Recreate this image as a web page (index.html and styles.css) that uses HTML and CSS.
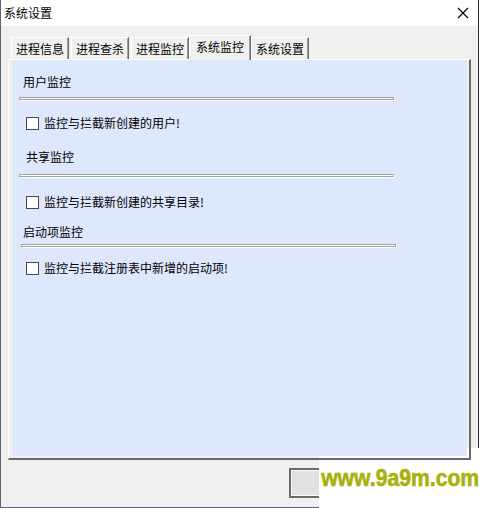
FILE: index.html
```html
<!DOCTYPE html>
<html lang="zh-CN">
<head>
<meta charset="utf-8">
<title>系统设置</title>
<link rel="stylesheet" href="styles.css">
</head>
<body>
<div class="window">
  <div class="titlebar">
    <span class="title">系统设置</span>
    <svg class="close" width="12" height="12" viewBox="0 0 12 12"><path d="M1 1 L11 11 M11 1 L1 11" stroke="#000" stroke-width="1.1" fill="none"/></svg>
  </div>
  <div class="body">
    <div class="tabs">
      <div class="tab t1">进程信息</div>
      <div class="tab t2">进程查杀</div>
      <div class="tab t3">进程监控</div>
      <div class="tab sel">系统监控</div>
      <div class="tab t5">系统设置</div>
    </div>
    <div class="panel">
      <div class="page">
        <div class="label l1">用户监控</div>
        <div class="groove g1"></div>
        <div class="check c1"><span class="box"></span><span class="ctext">监控与拦截新创建的用户!</span></div>
        <div class="label l2">共享监控</div>
        <div class="groove g2"></div>
        <div class="check c2"><span class="box"></span><span class="ctext">监控与拦截新创建的共享目录!</span></div>
        <div class="label l3">启动项监控</div>
        <div class="groove g3"></div>
        <div class="check c3"><span class="box"></span><span class="ctext">监控与拦截注册表中新增的启动项!</span></div>
      </div>
    </div>
    <div class="footer">
      <div class="button"></div>
    </div>
  </div>
  <div class="watermark"><span class="wm-text">www.9a9m.com</span></div>
</div>
</body>
</html>
```

FILE: styles.css
```css
* { box-sizing: border-box; }
html, body { margin: 0; padding: 0; }
body {
  width: 479px;
  height: 508px;
  overflow: hidden;
  background: #f0f0f0;
  font-family: "Noto Sans CJK SC", "Noto Sans", sans-serif;
  font-size: 12px;
  color: #000;
}
.window {
  position: relative;
  width: 479px;
  height: 508px;
  border-left: 1px solid #5d6470;
  border-right: 1px solid #2e2e2e;
  border-bottom: 1px solid #5d6470;
  background: #f0f0f0;
}
.titlebar {
  height: 26px;
  background: #fff;
  display: flex;
  align-items: center;
  justify-content: space-between;
  padding: 0 9px 0 3px;
}
.title { line-height: 16px; }
.close { display: block; }
.body { padding-top: 9px; }
.tabs {
  display: flex;
  align-items: flex-end;
  height: 24px;
  padding-left: 10px;
  position: relative;
  z-index: 2;
}
.tab {
  height: 22px;
  width: 58px;
  background: #f0f0f0;
  border-top: 1px solid #fff;
  border-left: 1px solid #fff;
  border-right: 1px solid #696969;
  box-shadow: inset -1px 0 0 #a0a0a0;
  display: flex;
  align-items: center;
  justify-content: center;
  line-height: 16px;
  padding-top: 1px;
}
.t1, .t2 { margin-right: 2px; }
.tab.sel {
  width: 62px;
  height: 25px;
  margin-bottom: -1px;
  padding-top: 0;
  padding-bottom: 2px;
}
.panel {
  margin-left: 7px;
  width: 463px;
  height: 401px;
  border-top: 1px solid #fff;
  border-left: 1px solid #fff;
  border-right: 2px solid #696969;
  border-bottom: 2px solid #696969;
  padding: 0 2px 2px 3px;
  position: relative;
  z-index: 1;
}
.page {
  height: 100%;
  background: #dee8fc;
  padding-top: 14px;
}
.label {
  line-height: 16px;
  height: 16px;
}
.l1 { margin-left: 11px; }
.l2 { margin-left: 14px; margin-top: 18px; }
.l3 { margin-left: 11px; margin-top: 14px; }
.groove {
  height: 3px;
  border: 1px solid #a0a0a0;
  background: #fff;
  box-shadow: 1px 1px 0 #fff;
  width: 375px;
  margin-left: 7px;
}
.g1 { margin-top: 7px; }
.g2 { margin-top: 9px; }
.g3 { margin-top: 4px; margin-left: 9px; }
.check {
  display: flex;
  align-items: center;
  height: 16px;
  margin-left: 14px;
}
.c1 { margin-top: 15px; }
.c2 { margin-top: 17px; }
.c3 { margin-top: 13px; }
.box {
  width: 13px;
  height: 13px;
  border: 1px solid #4a4a4a;
  background: #fff;
  margin-right: 5px;
  flex: none;
}
.ctext { line-height: 16px; }
.footer {
  padding: 8px 0 0 288px;
}
.button {
  width: 75px;
  height: 30px;
  border: 2px solid #6a6a6a;
  background: #e1e1e1;
  box-shadow: inset 0 0 0 1px #fcfcfc;
}
.watermark {
  position: absolute;
  left: 318px;
  top: 448px;
  width: 161px;
  height: 60px;
  background: #fff;
  overflow: hidden;
}
.wm-text {
  display: block;
  color: #a8b10a;
  font-family: "Liberation Sans", Arial, sans-serif;
  font-weight: bold;
  font-size: 23px;
  line-height: 60px;
  white-space: nowrap;
  -webkit-text-stroke: 0.6px #a8b10a;
  transform: scaleX(0.92);
  transform-origin: 2px 0;
  margin-left: 2px;
}
```
